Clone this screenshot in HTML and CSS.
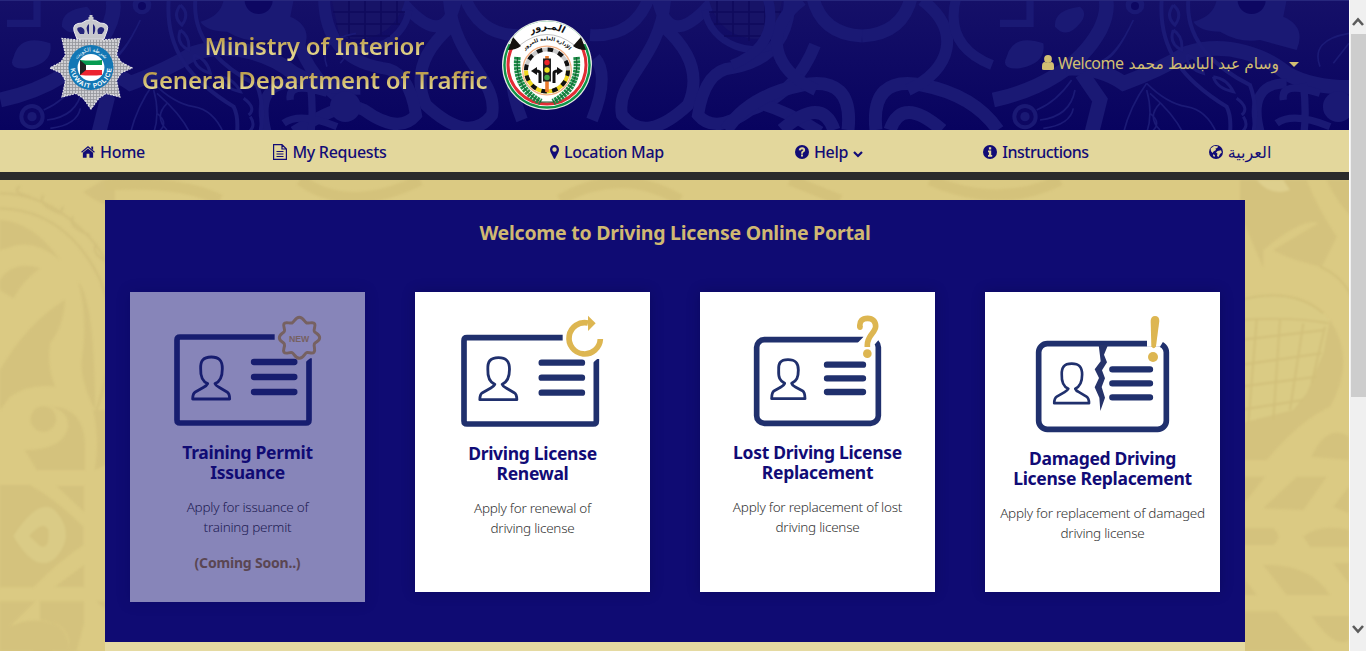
FILE: index.html
```html
<!DOCTYPE html>
<html lang="en">
<head>
<meta charset="utf-8">
<title>Driving License Online Portal</title>
<link rel="stylesheet" href="styles.css">
</head>
<body>
<div class="window">
<div class="page">
  <header class="header">
    <svg class="pattern" viewBox="0 0 1349 130" aria-hidden="true">
      <defs>
        <linearGradient id="hb" x1="0" y1="0" x2="0" y2="1"><stop offset="0" stop-color="#151068"/><stop offset="1" stop-color="#08035f"/></linearGradient>
        <g id="scroll" transform="scale(.3333)">
          <g fill="none" stroke="#1a1974" stroke-width="44">
            <path d="M-20 300C120 270 240 200 300 90Q325 40 318 0"/>
            <path d="M200 205Q300 200 370 250Q480 210 560 160C680 120 800 170 860 220Q940 265 1060 262"/>
            <path d="M245 220L300 300L275 400"/>
            <path d="M0 70H90V0" stroke-width="22"/>
            <path d="M860 250Q740 250 780 400" stroke-width="30"/>
            <path d="M910 250Q920 330 912 400M830 370Q880 335 990 380M850 300Q840 240 960 280" stroke-width="22"/>
          </g>
          <g fill="none" stroke="#1b1a76" stroke-width="12">
            <path d="M485 0C475 150 550 240 680 320Q695 350 690 400M565 0C555 130 660 210 750 255Q775 320 760 400"/>
            <path d="M520 15q-25 35 5 60q25-35-5-60M520 90q-15 40 25 60q5-40-25-60M560 165q0 40 50 55q-10-45-50-55M640 230q10 35 60 45q-20-40-60-45M710 295q40 30 15 50M730 350q20 30-10 50" stroke-width="9"/>
            <path d="M440 250Q390 320 370 400M440 250Q500 310 560 320T650 400M440 270Q460 340 440 400M450 280Q520 340 550 400M450 340q40 30 0 60M480 310q-40 40 0 80M110 330q60-25 105-90M120 360q90-10 105-90M130 385q80-10 90-60M400 60q-50 110-110 130M385 90q-40 80-70 90M960 200Q930 120 1047 100M1000 190L1047 130" stroke-width="5"/>
          </g>
          <g fill="#1a1974">
            <path d="M240 20Q160 30 165 80Q200 120 240 70Q265 40 240 20M130 130Q40 100 20 170Q0 210 60 205Q140 190 130 130M650 0Q640 50 580 65Q600 95 660 95Q720 130 780 120L890 150Q920 80 850 50L860 0Z"/>
            <circle cx="1015" cy="320" r="46"/><circle cx="75" cy="350" r="38"/><circle cx="405" cy="15" r="28"/>
          </g>
          <g fill="#0d0762"><circle cx="755" cy="0" r="42"/><circle cx="75" cy="350" r="26"/><circle cx="405" cy="18" r="12"/></g>
          <circle cx="75" cy="350" r="14" fill="#1a1974"/>
        </g>
        <g id="arch" fill="none" stroke="#1a1974" stroke-width="13">
          <path d="M0 36Q42 34 50-6M14 130Q8 75 60 85T136 130M28 130Q40 95 80 130"/>
          <path d="M60 0C100 30 90 70 46 90" stroke-width="12"/>
          <path d="M95-5Q80 45 130 65" stroke-width="10"/>
        </g>
        <g id="leaf">
          <g fill="none" stroke="#1a1974" stroke-width="12">
            <path d="M-10 35Q35 38 50-5M-5 58Q10 75-8 120M58 0Q70 55 118 -5M65 0C60 60 15 80 22 115Q45 145 88 105Q106 65 65 28"/>
            <path d="M190-5Q190 58 132 68Q105 70 98 115Q115 135 150 110Q195 95 215 45" />
            <path d="M156 102Q190 112 220 132"/>
            <path d="M105 10C110 45 155 60 180 42" stroke-width="7"/>
          </g>
          <path d="M108-3Q120 46 174 38L183-3Z" fill="#171367"/>
          <path d="M117 0V25M133-2V36M149-2V41M165-2V39M109 12H181M114 24H178M124 36H171" fill="none" stroke="#0f0a5c" stroke-width="1.500"/>
        </g>
      </defs>
      <rect width="1349" height="130" fill="url(#hb)"/>
      <g class="soft">
      <use href="#leaf" x="600"/><use href="#leaf" transform="translate(514 0) scale(-1 1)"/>
      <use href="#arch" x="862"/><use href="#arch" transform="translate(862 0) scale(-1 1)"/>
      <use href="#scroll" x="1000"/><use href="#scroll" x="7"/>
      </g>
      <path d="M0 .5H1349" stroke="#27277d"/>
    </svg>
    <div class="brand">
      <svg class="police" viewBox="48 12 86 100">
        <defs><pattern id="weave" width="3" height="3" patternUnits="userSpaceOnUse"><rect width="3" height="3" fill="#cfcfd3"/><path d="M0 .5H3M.5 0V3" stroke="#94969c" stroke-width=".8"/></pattern>
        <path id="pb" d="M70.500 67.500A20.500 20.500 0 0 0 111.500 67.500"/><path id="pt" d="M75 67.500A16 16 0 0 1 107 67.500"/></defs>
        <path d="M91 109L83 98L76 93.500L62 97L65.500 80.500L61 73L50 68L61 62L65.500 55L62 38.500L79 40L91 30L103 40L120 38.500L116.500 55L121 62L132 68L121 73L116.500 80.500L120 97L106 93.500L99 98Z" fill="url(#weave)" stroke="#e5e5e8" stroke-width="1.200" stroke-dasharray="2 1"/>
        <path d="M77 39L74 31Q72 23 82 23Q87 19 91 20Q95 19 100 23Q110 23 107 31L104 39Z" fill="#c9c9cf" stroke="#ececf0" stroke-width="1"/>
        <path d="M80 34Q74 27 81 27Q86 29 84 34M88 34Q85 26 89 24L89 34M93 34V24Q97 27 94 34M98 34Q96 28 101 27Q107 28 102 34" fill="#24247a"/>
        <path d="M78 37H104M91 15V23M88.500 18.500H93.500" stroke="#c7c8cd" stroke-width="3"/>
        <circle cx="91" cy="67.500" r="22.500" fill="#1377b5"/>
        <circle cx="91" cy="67.500" r="13.400" fill="#fff"/>
        <path d="M80 60.500H102V75H80Z" fill="#fff"/><path d="M80 60Q91 61 102 60V65H80Z" fill="#069b50"/><path d="M80 70H102V75Q91 76 80 75Z" fill="#ec2430"/><path d="M80 60L86 65V70L80 75Z" fill="#222"/>
        <text class="badge-text"><textPath href="#pb" startOffset="1" textLength="62">KUWAIT POLICE</textPath></text>
        <text class="badge-arabic"><textPath href="#pt" startOffset="50%" text-anchor="middle">شرطة الكويت</textPath></text>
      </svg>
      <h1 class="brand-name"><span class="brand-first">Ministry of Interior</span><span class="brand-second">General Department of Traffic</span></h1>
      <svg class="traffic" viewBox="500 18 94 94">
        <defs><clipPath id="disc"><circle cx="547" cy="65" r="43.800"/></clipPath>
        <path id="t1" d="M527 36A33 33 0 0 1 567 36"/><path id="t2" d="M522.500 53A30 30 0 0 1 571.500 53"/></defs>
        <circle cx="547" cy="65" r="45" fill="#e7e9e6"/>
        <g clip-path="url(#disc)">
          <circle cx="547" cy="65" r="44" fill="#fff"/>
          <circle cx="547" cy="65" r="42.800" fill="none" stroke="#109448" stroke-width="3"/>
          <circle cx="547" cy="65" r="39" fill="none" stroke="#e22d35" stroke-width="3"/>
          <path d="M507 43L516 33Q530 18 547 18Q564 18 578 33L587 43L577 47Q547 22 517 47Z" fill="#fff"/>
          <path d="M513 37L521 46Q516 50 508 50ZM581 37L573 46Q578 50 586 50Z" fill="#15130f"/>
        </g>
        <path d="M520 45Q547 24 574 45" fill="none" stroke="#999" stroke-width=".6"/>
        <g fill="none" stroke="#188b44" stroke-width="6.500" stroke-dasharray="2.600 .7"><path d="M517.500 57Q514 88 541 102M576.500 57Q580 88 553 102"/></g>
        <path d="M517.500 57Q514 88 541 102M576.500 57Q580 88 553 102M541 102H553" fill="none" stroke="#125d30" stroke-width="1"/>
        <circle cx="547" cy="70.500" r="24.300" fill="#fff" stroke="#f4b184" stroke-width="1.300"/>
        <circle cx="547" cy="70.500" r="21" fill="none" stroke="#ccc" stroke-width="4"/>
        <path d="M526 70.500A21 21 0 0 0 568 70.500" fill="none" stroke="#efd71e" stroke-width="4"/>
        <circle cx="547" cy="70.500" r="21" fill="none" stroke="#111" stroke-width="4" stroke-dasharray="5.500 5.500"/>
        <path d="M545.200 56H548.800V92H545.200Z" fill="#ed7b2d"/><rect x="543" y="58.500" width="8" height="23" fill="#222"/>
        <circle cx="547" cy="62.500" r="2.700" fill="#ee2528"/><circle cx="547" cy="70" r="2.700" fill="#f4e51e"/><circle cx="547" cy="77.500" r="2.700" fill="#44aa48"/>
        <path d="M540 83V73Q540 71 536 71M554 83V73Q554 71 558 71" fill="none" stroke="#111" stroke-width="3"/><path d="M531 71L537 67V75ZM563 71L557 67V75Z" fill="#111"/>
        <text class="seal-large"><textPath href="#t1" startOffset="50%" text-anchor="middle">المـرور</textPath></text>
        <text class="seal-small"><textPath href="#t2" startOffset="50%" text-anchor="middle">الإدارة العامة للمرور</textPath></text>
      </svg>
    </div>
    <div class="user">
      <svg class="user-icon" viewBox="0 0 12 15"><path d="M0 14V11Q0 7 3 7Q6 9 9 7Q12 7 12 11V14Q12 15 10 15H2Q0 15 0 14Z"/><circle cx="6" cy="4" r="3.900"/></svg>
      <span class="welcome">Welcome</span><bdi class="user-name">وسام عبد الباسط محمد</bdi>
      <svg class="caret" viewBox="0 0 10 5"><path d="M0 0H10L5 5Z"/></svg>
    </div>
  </header>
  <nav class="nav">
    <a class="nav-item"><svg class="ico" viewBox="0 0 15 14"><path d="M7.500 3.300L13 7.800V13.200H9V9H6V13.200H2V7.800Z"/><path d="M.6 7.200L7.500 1.400L14.400 7.200" fill="none" stroke="currentColor" stroke-width="1.300"/><path d="M11 1H13V5L11 3.300Z"/></svg><span>Home</span></a>
    <a class="nav-item"><svg class="ico doc" viewBox="0 0 14 16"><path d="M.6.6H9L13.400 5V15.400H.6ZM9 .6V5H13.400M3.500 7.500H10.500M3.500 10H10.500M3.500 12.500H10.500" fill="none" stroke="currentColor" stroke-width="1.200"/></svg><span>My Requests</span></a>
    <a class="nav-item"><svg class="ico pin" viewBox="0 0 9 14"><path fill-rule="evenodd" d="M4.500 0A4.500 4.500 0 0 1 9 4.500Q9 6 8 8L5.200 13.500Q4.500 14.400 3.800 13.500L1 8Q0 6 0 4.500A4.500 4.500 0 0 1 4.500 0M4.500 2.300A2.200 2.200 0 1 0 4.500 6.700A2.200 2.200 0 1 0 4.500 2.300"/></svg><span>Location Map</span></a>
    <a class="nav-item"><svg class="ico" viewBox="0 0 14 14"><circle cx="7" cy="7" r="7"/><path d="M4.700 5.300Q5 3.300 7.200 3.300Q9.300 3.400 9.200 5.100Q9 6.300 7.900 6.700Q7 7.100 7 8.700M7 9.500V11.500" fill="none" stroke="#e3d79c" stroke-width="1.900"/></svg><span>Help</span><svg class="chev" viewBox="0 0 10 7"><path d="M1 1L5 5L9 1" fill="none" stroke="currentColor" stroke-width="2.200"/></svg></a>
    <a class="nav-item"><svg class="ico" viewBox="0 0 14 14"><circle cx="7" cy="7" r="7"/><path d="M5.900 2.200H8.200V4.400H5.900ZM5 5.500H8.200V10H9.200V11.700H5V10H5.900V7.200H5Z" fill="#e3d79c"/></svg><span class="tight">Instructions</span></a>
    <a class="nav-item"><svg class="ico" viewBox="0 0 14 14"><circle cx="7" cy="7" r="7"/><path d="M5 1L9 1.300L8.300 3L6.500 3.500L7 5L4.500 6.500L3.600 8L2 6.300L1.600 3.600ZM8.500 6L12 5.200L12.800 7.500L11 9L9.500 12L8 11L8.400 8.500L7 7.500ZM4.500 9L6 10.500L5.500 12L4 11Z" fill="#e3d79c"/></svg><bdi class="arabic">العربية</bdi></a>
  </nav>
  <div class="body">
    <svg class="pattern" viewBox="0 180 1349 471" aria-hidden="true">
      <rect y="180" width="1349" height="471" fill="#dbca83"/>
      <g class="softer">
        <g transform="translate(0 180) scale(.3333)" fill="#d4c27d">
          <path d="M250 35L310 0H345V80Q290 70 250 35M0 120Q100 125 180 240Q100 170 20 205L0 210ZM0 300Q40 240 120 265Q70 300 40 355L0 330ZM0 570Q80 430 195 360Q190 440 150 490Q140 560 165 620Q90 610 30 650L0 690ZM235 305Q285 370 285 690Q240 600 245 540Q265 420 235 305M75 810Q190 810 205 740Q205 690 150 680Q250 680 255 790V870H110ZM280 690H345V840L285 870Q300 780 280 690M170 918H252V995ZM0 915H90Q170 960 250 1040V1095Q180 1140 100 1222H0ZM165 1220L252 1155V1220ZM0 1265H105L30 1340Q90 1310 160 1330Q210 1350 205 1413H0ZM120 1265H252V1330L230 1413H205Q220 1330 120 1320ZM290 1265H345V1310Z"/>
          <circle cx="130" cy="717" r="38"/><circle cx="125" cy="1400" r="35"/>
          <path d="M40 1068Q130 930 180 1010Q220 1070 170 1130Q110 1190 40 1068" fill="#dacb86"/><path d="M88 1068Q130 1020 145 1050Q150 1110 120 1098Z"/>
        </g>
        <g transform="translate(0 180) scale(.3333)" fill="none" stroke="#d3c17c" stroke-width="7"><path d="M0 40Q110 40 200 110T320 250M0 85Q180 90 280 260T290 690M60 20Q30 35 90 50M130 45q-20 30 50 55l10-20M220 110q-20 30 50 55M290 190q-20 30 30 55"/></g>
      <g transform="translate(1240 180) scale(.3333)">
        <path d="M0 0H200Q230 80 290 170L245 260Q150 240 100 210L235 130Q190 110 70 210V265L0 100ZM260 0H350V125Q290 70 260 0M270 420Q350 540 270 680Q180 720 80 840H0V730Q200 690 270 420M215 830Q260 730 327 770V840ZM0 890H75L20 960L0 970ZM70 985L170 890H260L190 990ZM280 980L327 920V1000ZM0 1045H100Q130 1070 100 1095H0ZM190 1070Q240 1030 327 1050V1100H210ZM70 1155Q210 1150 270 1245H140ZM280 1150H327V1210ZM0 1180L50 1245H0ZM0 1295H110L220 1413H0ZM215 1308H327V1380Q285 1410 215 1308" fill="#d4c27d"/>
        <path d="M0 350Q160 320 250 400L268 425L250 520L200 640L160 690L0 730Z" fill="#dacb84"/>
        <path d="M0 360Q160 320 250 400M0 420Q160 410 265 430M0 480L255 450M0 555L245 520M0 620L230 590M0 690L190 660M50 420L25 730M120 420L100 720M190 430L150 690M255 440L215 610M240 260Q310 290 340 360" fill="none" stroke="#d2c07a" stroke-width="6"/>
        <path d="M50 0Q90 50 150 30L130 0" fill="#decf8d"/>
      </g>
      <path d="M105 185Q180 180 220 200M300 180Q350 215 420 180M560 200Q620 165 680 200M790 180L840 200M930 180Q1000 210 1060 180" stroke="#d4c27b" stroke-width="11" fill="none"/>
      </g>
    </svg>
    <main class="content">
      <section class="panel">
        <h2 class="panel-title">Welcome to Driving License Online Portal</h2>
        <div class="cards">
          <article class="card soon">
            <svg class="art art-a" viewBox="0 6 705 453">
              <path d="M436 141H150Q141 141 141 150V390Q141 399 150 399H528Q537 399 537 390V205" class="frame"/><path d="M520 222L548 198V190H520ZM434 128H440L438 152H434Z" class="white"/>
              <g id="person"><path d="M244 201C218 201 211 214 212 236C211 260 216 274 233 281Q230 287 221 292L196 306Q188 311 188 327H299Q299 311 291 306L267 292Q257 287 255 281C272 274 277 260 277 236C277 214 270 201 244 201Z" class="line"/></g>
              <path d="M372 216H493M372 261H493M372 306H493" class="rows"/>
              <path d="M508 82C520 82 523 96 530 99C537 101 550 94 554 101C558 108 550 117 553 124C556 130 569 132 569 143C569 154 556 156 553 162C550 170 558 180 552 187C547 193 536 186 530 188C523 191 521 205 508 205C496 205 493 191 486 188C479 186 467 193 462 187C457 180 466 170 463 162C460 156 448 154 448 143C448 132 460 130 463 124C466 117 458 108 462 101C466 94 479 101 486 99C493 96 496 82 508 82Z" class="gold-line"/>
              <text x="477" y="156" class="new" textLength="61" lengthAdjust="spacingAndGlyphs">NEW</text>
            </svg>
            <h3 class="card-title">Training Permit<br>Issuance</h3>
            <p class="card-text">Apply for issuance of<br>training permit</p>
            <p class="card-note">(Coming Soon..)</p>
          </article>
          <article class="card">
            <svg class="art art-b" viewBox="0 6 705 456">
              <path d="M443 143H156Q147 143 147 152V393Q147 402 156 402H535Q544 402 544 393V207" class="frame"/><path d="M525 226L556 199V190H525Z" class="white"/>
              <use href="#person" x="6.500" y="2"/>
              <path d="M380 218H501M380 263H501M380 308H501" class="rows"/>
              <path d="M556 147A47 47 0 1 1 519 99" class="arrow"/><path d="M519 77L542 100L519 123Z" class="gold"/>
            </svg>
            <h3 class="card-title">Driving License<br>Renewal</h3>
            <p class="card-text">Apply for renewal of<br>driving license</p>
          </article>
          <article class="card">
            <svg class="art art-a" viewBox="0 6 705 453">
              <rect x="170" y="149" width="365" height="251" rx="23" class="frame"/>
              <path d="M472 160L490 141V130H535V151L520 168V172H472Z" class="white"/>
              <path d="M264 209C240 209 235 221 236 240C235 263 239 272 254 280Q251 287 243 291L223 302Q215 307 215 326H315Q315 307 307 302L286 291Q277 287 275 280C290 272 295 263 295 240C295 221 289 209 264 209Z" class="line"/>
              <path d="M381 224H489M381 265H489M381 306H489" class="rows"/>
              <path d="M480 112C477 93 487 85 503 85C518 85 527 95 527 109C527 128 502 136 502 165V171" class="question"/><circle cx="480" cy="112" r="8" class="gold"/><circle cx="502" cy="191" r="13" class="gold"/>
            </svg>
            <h3 class="card-title">Lost Driving License<br>Replacement</h3>
            <p class="card-text">Apply for replacement of lost<br>driving license</p>
          </article>
          <article class="card">
            <svg class="art art-c" viewBox="0 6 705 471">
              <rect x="161" y="161" width="383" height="257" rx="26" class="frame"/>
              <path d="M486 140H535V154L525 170H486Z" class="white"/>
              <path d="M341 165H369L357 194L366 217L351 241L360 265L350 291L360 323L346 363L343 323L329 292L342 264L329 238L347 214Z" class="crack"/>
              <use href="#person" transform="translate(31 32) scale(.94)"/>
              <path d="M382 238H495M382 280H495M382 322H495" class="rows"/>
              <path d="M510 78Q523 78 523 93L513 169Q506 181 499 169L497 93Q498 78 510 78Z" class="gold"/><circle cx="504" cy="201" r="15" class="gold"/>
            </svg>
            <h3 class="card-title">Damaged Driving<br>License Replacement</h3>
            <p class="card-text">Apply for replacement of damaged<br>driving license</p>
          </article>
        </div>
      </section>
      <div class="after"></div>
    </main>
  </div>
</div>
<aside class="scrollbar">
  <svg class="arrow-up" viewBox="0 0 12 9"><path d="M1 8L6 2.500L11 8"/></svg>
  <div class="thumb"></div>
  <svg class="arrow-down" viewBox="0 0 12 9"><path d="M1 1L6 6.500L11 1"/></svg>
</aside>
</div>
</body>
</html>
```
FILE: styles.css
```css
* { box-sizing: border-box; }
body { margin: 0; overflow: hidden; font-family: "Noto Sans", "DejaVu Sans", sans-serif; }
.window { display: flex; height: 651px; overflow: hidden; }
.page { width: 1349px; display: flex; flex-direction: column; }
.header { position: relative; height: 130px; display: flex; justify-content: space-between; flex: none; }
.pattern { position: absolute; inset: 0; width: 100%; height: 100%; }
.soft { filter: blur(.7px); }
.softer { filter: blur(1px); }
.brand { position: relative; display: flex; align-items: flex-start; padding-left: 48px; }
.police { width: 86px; height: 100px; margin-top: 12px; }
.traffic { width: 94px; height: 94px; margin: 18px 0 0 5px; }
.badge-text { font: bold 6.5px "Liberation Sans", sans-serif; fill: #fff; }
.badge-arabic { font: 5.5px "DejaVu Sans", sans-serif; fill: #fff; }
.seal-large { font: bold 9.5px "DejaVu Sans", sans-serif; fill: #111; }
.seal-small { font: bold 5px "DejaVu Sans", sans-serif; fill: #111; }
.brand-name { width: 361px; margin: 29px 0 0; display: flex; flex-direction: column; align-items: center; font-size: 24px; line-height: 34px; font-weight: 600; letter-spacing: -.15px; white-space: nowrap; }
.brand-first, .brand-second { background: linear-gradient(#b99a49 25%, #e3d58c 75%); background-clip: text; -webkit-background-clip: text; color: transparent; }
.user { position: relative; display: flex; align-items: center; margin: 50px 50px 0 0; height: 25px; color: #d2bf72; font-size: 16px; white-space: nowrap; }
.user-icon { width: 12px; height: 15px; margin-right: 4px; fill: #d2bf72; }
.welcome { margin-right: 5px; letter-spacing: -.5px; }
.user-name { font-size: 15.5px; }
.caret { width: 10px; height: 5px; margin: 3px 0 0 10px; fill: #d2bf72; }
.nav { height: 50px; flex: none; background: #e3d79c; border-bottom: 8px solid #2a2b2c; display: grid; grid-template-columns: 226px 208px 346px 98px 316px 92px; color: #120c76; font-size: 16px; font-weight: 500; letter-spacing: -.3px; }
.nav-item { display: flex; align-items: center; justify-content: center; white-space: nowrap; padding-top: 2px; }
.tight { letter-spacing: -.5px; }
.arabic { letter-spacing: 0; }
.ico { width: 14px; height: 14px; margin-right: 5px; fill: currentColor; }
.doc { height: 16px; }
.pin { width: 9px; }
.chev { width: 10px; height: 7px; margin: 5px 0 0 5px; }
.body { position: relative; flex: 1; padding: 20px 104px 0 105px; overflow: hidden; }
.content { position: relative; }
.panel { height: 442px; background: #0f0b73; padding: 20px 25px 0; }
.panel-title { margin: 0 0 46px; text-align: center; color: #d0b872; font-size: 19.5px; line-height: 26px; font-weight: 700; letter-spacing: -.25px; }
.cards { display: flex; gap: 50px; align-items: flex-start; }
.card { width: 235px; height: 300px; background: #fff; text-align: center; white-space: nowrap; box-shadow: 0 0 12px rgba(0, 0, 50, .3); }
.soon { height: 310px; opacity: .5; }
.art { display: block; width: 235px; }
.art-a { height: 151px; }
.art-b { height: 152px; }
.art-c { height: 157px; }
.frame { fill: none; stroke: #20306d; stroke-width: 17; }
.line { fill: none; stroke: #20306d; stroke-width: 8.5; stroke-linejoin: round; }
.rows { fill: none; stroke: #20306d; stroke-width: 19; stroke-linecap: round; }
.crack { fill: #26336a; }
.white { fill: #fff; }
.gold { fill: #ddb651; }
.gold-line { fill: none; stroke: #ddb651; stroke-width: 9; }
.arrow { fill: none; stroke: #ddb651; stroke-width: 17; }
.question { fill: none; stroke: #ddb651; stroke-width: 17; }
.new { font: bold 28px "Liberation Sans", sans-serif; fill: #ddb651; }
.card-title { position: relative; top: -1px; margin: 0 0 14px; color: #110b76; font-size: 17.5px; line-height: 20px; font-weight: 700; letter-spacing: -.3px; }
.card-text { margin: 0; color: #333; font-size: 13.5px; line-height: 20px; font-weight: 300; letter-spacing: -.25px; }
.card-note { margin: 16px 0 0; color: #a58232; font-size: 14px; line-height: 20px; font-weight: 700; letter-spacing: -.2px; }
.after { height: 9px; background: #e5daa1; }
.scrollbar { width: 17px; background: #f0f0f0; border-left: 1px solid #fff; display: flex; flex-direction: column; align-items: center; }
.scrollbar svg { width: 12px; height: 9px; fill: none; stroke: #5b5b5b; stroke-width: 2.6; flex: none; }
.arrow-up { margin: 17px 0 8px; }
.thumb { width: 15px; height: 363px; background: #cdcdcd; }
.arrow-down { margin-top: 228px; }
```
